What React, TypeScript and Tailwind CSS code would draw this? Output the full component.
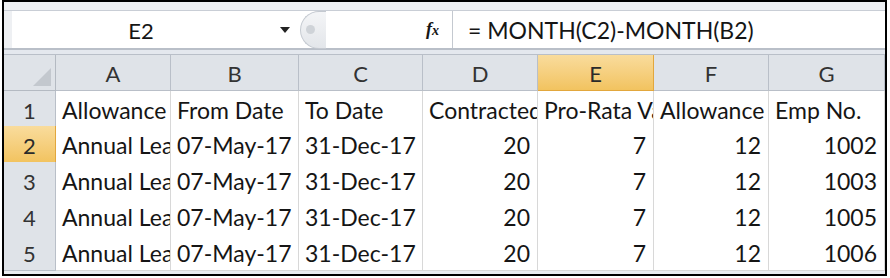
import React from "react";

const cols = ["A", "B", "C", "D", "E", "F", "G"];

const header = ["Allowance", "From Date", "To Date", "Contracted", "Pro-Rata Value", "Allowance", "Emp No."];

const rows = [
  ["Annual Leave", "07-May-17", "31-Dec-17", "20", "7", "12", "1002"],
  ["Annual Leave", "07-May-17", "31-Dec-17", "20", "7", "12", "1003"],
  ["Annual Leave", "07-May-17", "31-Dec-17", "20", "7", "12", "1005"],
  ["Annual Leave", "07-May-17", "31-Dec-17", "20", "7", "12", "1006"],
];

const gridCols = "grid grid-cols-[52px_115px_128px_124px_115px_116px_115px_1fr]";

// excel clips text at the next filled cell, so cells hide overflow
function Cell({ text, right }: { text: string; right?: boolean }) {
  return (
    <div
      className={`overflow-hidden whitespace-nowrap border-r border-b border-[#d8d8d8] bg-white flex items-center pt-[3px] ${
        right ? "justify-end pr-[7px]" : "pl-[6px]"
      }`}
    >
      {text}
    </div>
  );
}

export default function App() {
  return (
    <div
      className="w-[890px] h-[278px] bg-white overflow-hidden text-[#151515]"
      style={{ fontFamily: "Lato, 'Open Sans', sans-serif" }}
    >
      <div className="ml-[2px] w-[885px] h-[276px] border-2 border-black bg-[#e9ecf0] flex flex-col">
        {/* Formula bar */}
        <div className="pt-[8px] bg-[#eef0f3]">
          <div className="flex h-[38px] bg-white border-t border-[#c9ced6]">
            <div className="w-[8px] bg-[#eef0f3]" />
            <div className="w-[258px] flex items-center justify-center text-[22px] pt-[2px]">E2</div>
            <div className="w-[30px] flex items-center justify-center">
              <svg width="12" height="8" viewBox="0 0 12 8">
                <path d="M1 1h10L6 7z" fill="#222" />
              </svg>
            </div>
            <div className="w-[152px] flex items-center bg-white">
              <div className="w-[26px] h-[38px] rounded-l-full border-l border-t border-b border-[#c4c9d0] bg-gradient-to-b from-[#f4f5f7] to-[#e3e6ea] flex items-center pl-[5px]">
                <div className="w-[9px] h-[9px] rounded-full bg-[#cfd3d8]" />
              </div>
              <div className="flex-1" />
              <span
                className="italic font-bold text-[18px] pr-[13px]"
                style={{ fontFamily: "'Liberation Serif', serif" }}
              >
                f<span className="text-[14px]">x</span>
              </span>
            </div>
            <div className="flex-1 border-l border-[#c4c9d0] flex items-center pl-[15px] text-[23px] pt-[2px]">
              = MONTH(C2)-MONTH(B2)
            </div>
          </div>
          <div className="h-[2px] bg-[#b9bfc8]" />
          <div className="h-[4px] bg-[#e4e8ee]" />
          <div className="h-[1px] bg-[#b9bfc8]" />
        </div>

        {/* Sheet */}
        <div className={`${gridCols} h-[36px] text-[22px]`}>
          <div className="bg-[#dfe3e8] border-r border-b border-[#b4bac2] flex items-end justify-end p-[4px]">
            <svg width="18" height="18" viewBox="0 0 18 18">
              <path d="M18 0V18H0z" fill="#c3c8ce" />
            </svg>
          </div>
          {cols.map((c) => (
            <div
              key={c}
              className={`flex items-center justify-center border-r border-b pt-[2px] ${
                c === "E"
                  ? "bg-gradient-to-b from-[#f9dc9c] to-[#f2c35f] border-[#e2a73d] text-[#2a2a2a]"
                  : "bg-[#dfe3e8] border-[#b9bfc8] text-[#333]"
              }`}
            >
              {c}
            </div>
          ))}
        </div>

        <div className={`${gridCols} h-[35px] text-[23px]`}>
          <div className="bg-[#dfe3e8] border-r border-b border-[#b9bfc8] flex items-center justify-center text-[#333] text-[22px] pt-[3px]">
            1
          </div>
          {header.map((h, i) => (
            <Cell key={i} text={h} />
          ))}
        </div>

        {rows.map((r, ri) => (
          <div key={ri} className={`${gridCols} h-[36px] text-[23px]`}>
            <div
              className={`border-r border-b flex items-center justify-center text-[22px] pt-[3px] ${
                ri === 0
                  ? "bg-gradient-to-b from-[#f9dc9c] to-[#f2c35f] border-[#e2a73d] text-[#2a2a2a]"
                  : "bg-[#dfe3e8] border-[#b9bfc8] text-[#333]"
              }`}
            >
              {ri + 2}
            </div>
            {r.map((v, i) => (
              <Cell key={i} text={v} right={i >= 3} />
            ))}
          </div>
        ))}
      </div>
    </div>
  );
}
